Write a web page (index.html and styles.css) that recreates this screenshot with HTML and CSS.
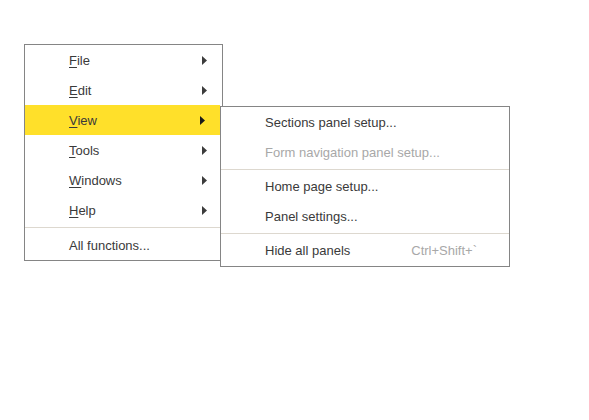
FILE: index.html
```html
<!DOCTYPE html>
<html>
<head>
<meta charset="utf-8">
<link rel="stylesheet" href="styles.css">
</head>
<body>
<div class="menu main-menu">
  <div class="item"><span class="label"><u>F</u>ile</span><svg class="arrow" width="5" height="9" viewBox="0 0 5 9"><polygon points="0,0 5,4.5 0,9" fill="#3c3c3c"/></svg></div>
  <div class="item"><span class="label"><u>E</u>dit</span><svg class="arrow" width="5" height="9" viewBox="0 0 5 9"><polygon points="0,0 5,4.5 0,9" fill="#3c3c3c"/></svg></div>
  <div class="item active"><span class="label"><u>V</u>iew</span><svg class="arrow" width="5" height="9" viewBox="0 0 5 9"><polygon points="0,0 5,4.5 0,9" fill="#1a1a1a"/></svg></div>
  <div class="item"><span class="label"><u>T</u>ools</span><svg class="arrow" width="5" height="9" viewBox="0 0 5 9"><polygon points="0,0 5,4.5 0,9" fill="#3c3c3c"/></svg></div>
  <div class="item"><span class="label"><u>W</u>indows</span><svg class="arrow" width="5" height="9" viewBox="0 0 5 9"><polygon points="0,0 5,4.5 0,9" fill="#3c3c3c"/></svg></div>
  <div class="item"><span class="label"><u>H</u>elp</span><svg class="arrow" width="5" height="9" viewBox="0 0 5 9"><polygon points="0,0 5,4.5 0,9" fill="#3c3c3c"/></svg></div>
  <div class="sep main-sep"></div>
  <div class="item"><span class="label">All functions...</span></div>
</div>
<div class="menu sub-menu">
  <div class="item"><span class="label">Sections panel setup...</span></div>
  <div class="item disabled"><span class="label">Form navigation panel setup...</span></div>
  <div class="sep"></div>
  <div class="item"><span class="label">Home page setup...</span></div>
  <div class="item"><span class="label">Panel settings...</span></div>
  <div class="sep"></div>
  <div class="item"><span class="label">Hide all panels</span><span class="shortcut">Ctrl+Shift+`</span></div>
</div>
</body>
</html>
```

FILE: styles.css
```css
html, body {
  margin: 0;
  padding: 0;
  background: #ffffff;
}
body {
  width: 589px;
  height: 420px;
  position: relative;
  font-family: "Liberation Sans", Arial, sans-serif;
  font-size: 13px;
  color: #3a3a3a;
}
.menu {
  position: absolute;
  background: #ffffff;
  border: 1px solid #858585;
  display: flex;
  flex-direction: column;
  box-sizing: border-box;
}
.main-menu {
  left: 24px;
  top: 44px;
  width: 199px;
  height: 217px;
}
.sub-menu {
  left: 220px;
  top: 106px;
  width: 290px;
  height: 161px;
}
.item {
  height: 30px;
  display: flex;
  align-items: center;
  padding-left: 44px;
  padding-right: 16px;
  flex: none;
}
.main-menu .item {
  padding-right: 15px;
}
.item .label {
  flex: 1;
  white-space: nowrap;
}
.item u {
  text-decoration: underline;
  text-underline-offset: 2px;
}
.item.active {
  background: #ffe02a;
  margin-right: 2px;
}
.item.disabled {
  color: #a8a8a8;
}
.arrow {
  display: block;
  flex: none;
}
.shortcut {
  color: #a8a8a8;
  margin-right: 16px;
}
.sep {
  flex: none;
  height: 1px;
  background: #ddd8cf;
  margin: 2px 0 1px 0;
}
.main-sep {
  margin: 2px 0 2px 0;
}
```
